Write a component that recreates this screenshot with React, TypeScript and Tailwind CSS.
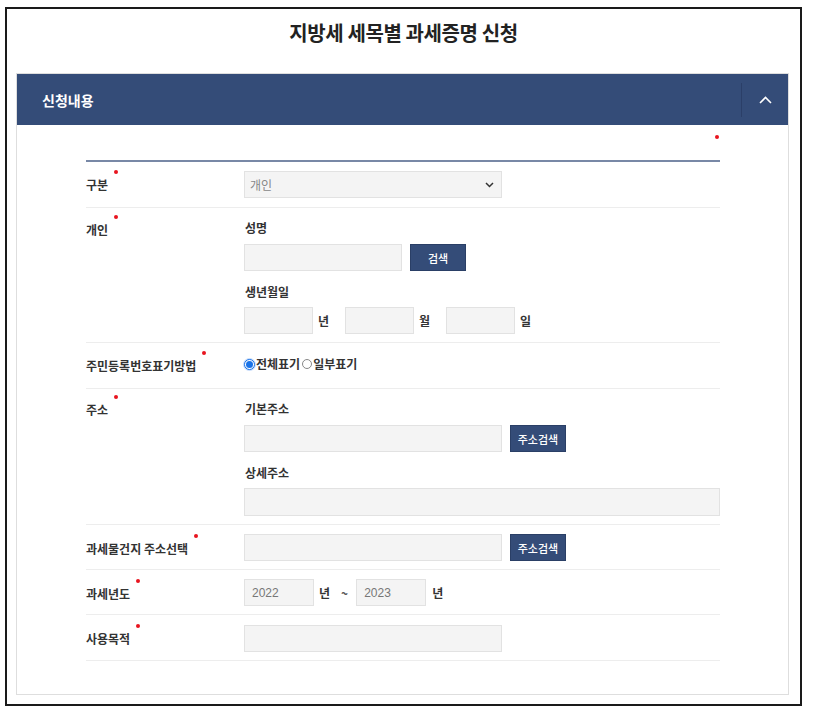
import React from "react";

const KR = { fontFamily: '"Noto Sans CJK KR", "Noto Sans", sans-serif' };

function Dot({ dx = 6 }: { dx?: number }) {
  return (
    <span
      className="absolute top-[-4px] w-[4px] h-[4px] rounded-full bg-[#e8141e]"
      style={{ left: `calc(100% + ${dx}px)` }}
    />
  );
}

function Label({ text, pt, dx }: { text: string; pt: string; dx?: number }) {
  return (
    <div className={`w-[158px] shrink-0 flex items-start ${pt}`}>
      <span className="relative block h-[22px] text-[12px] leading-[22px] font-semibold text-[#333]">
        {text}
        <Dot dx={dx} />
      </span>
    </div>
  );
}

function Input({ w, h = "h-[27px]", children }: { w: string; h?: string; children?: React.ReactNode }) {
  return (
    <div className={`${w} ${h} shrink-0 bg-[#f4f4f4] border border-[#e2e2e2] flex items-center`}>{children}</div>
  );
}

function Btn({ text, w }: { text: string; w: string }) {
  return (
    <div className={`${w} h-[27px] shrink-0 bg-[#344c78] border border-[#2a3f66] flex items-center justify-center text-white text-[11px] leading-[14px] font-medium`}>
      {text}
    </div>
  );
}

function SubLabel({ text }: { text: string }) {
  return <div className="h-[22px] leading-[22px] text-[12px] font-semibold text-[#333] pl-[1px]">{text}</div>;
}

export default function App() {
  return (
    <div className="w-[814px] h-[716px] bg-white pt-[7px] pl-[5px]" style={KR}>
      <div className="w-[797px] h-[699px] border-2 border-[#1a1a1a] flex flex-col">
        <div className="h-[64px] shrink-0 pt-[10px] text-center text-[20px] leading-[28px] font-bold text-[#222] tracking-[-0.4px]">
          지방세 세목별 과세증명 신청
        </div>
        <div className="ml-[9px] w-[773px] h-[622px] border border-[#dedede] flex flex-col">
          <div className="h-[51px] bg-[#344c78] flex items-center justify-between shrink-0">
            <div className="pl-[25px] text-white text-[14px] leading-[20px] font-bold">신청내용</div>
            <div className="w-[47px] h-[34px] border-l border-[#2b3f68] flex items-center justify-center">
              <svg width="13" height="8" viewBox="0 0 13 8">
                <path d="M1 7 L6.5 1.5 L12 7" fill="none" stroke="#fff" strokeWidth="1.6" />
              </svg>
            </div>
          </div>
          <div className="pl-[69px] pr-[68px] text-[12px] leading-[22px]">
            <div className="h-[35px] relative">
              <span className="absolute right-[1px] top-[10px] w-[4px] h-[4px] rounded-full bg-[#e8141e]" />
            </div>
            <div className="h-[2px] bg-[#7888a6]" />

            {/* 구분 */}
            <div className="flex border-b border-[#ededed] pt-[9px] pb-[9px]">
              <Label text="구분" pt="pt-[3px]" />
              <div className="w-[258px] h-[27px] bg-[#f4f4f4] border border-[#e2e2e2] flex items-center justify-between pl-[5px] pr-[7px]">
                <span className="text-[12px] text-[#888]">개인</span>
                <svg width="9" height="6" viewBox="0 0 9 6">
                  <path d="M1 1 L4.5 4.5 L8 1" fill="none" stroke="#333" strokeWidth="1.5" />
                </svg>
              </div>
            </div>

            {/* 개인 */}
            <div className="flex border-b border-[#ededed] pt-[9px] pb-[8px]">
              <Label text="개인" pt="pt-[2px]" />
              <div className="flex flex-col">
                <SubLabel text="성명" />
                <div className="flex gap-[8px] mt-[5px]">
                  <Input w="w-[158px]" />
                  <Btn text="검색" w="w-[56px]" />
                </div>
                <div className="mt-[10px]">
                  <SubLabel text="생년월일" />
                </div>
                <div className="flex items-center mt-[4px] text-[12px] font-semibold text-[#333]">
                  <Input w="w-[69px]" />
                  <span className="w-[32px] pl-[5px]">년</span>
                  <Input w="w-[69px]" />
                  <span className="w-[32px] pl-[5px]">월</span>
                  <Input w="w-[69px]" />
                  <span className="pl-[5px]">일</span>
                </div>
              </div>
            </div>

            {/* 주민등록번호표기방법 */}
            <div className="flex border-b border-[#ededed] pt-[10px] pb-[11px]">
              <Label text="주민등록번호표기방법" pt="pt-[2px]" />
              <div className="h-[22px] flex items-center text-[12px] font-semibold text-[#333]">
                <span className="w-[11px] h-[11px] rounded-full border border-[#1a73e8] bg-white flex items-center justify-center shadow-[0_0_0_1px_#c8dcfa]">
                  <span className="w-[7px] h-[7px] rounded-full bg-[#1a73e8]" />
                </span>
                <span className="ml-[1px]">전체표기</span>
                <span className="ml-[2px] w-[10px] h-[10px] rounded-full border border-[#888] bg-white" />
                <span className="ml-[1px]">일부표기</span>
              </div>
            </div>

            {/* 주소 */}
            <div className="flex border-b border-[#ededed] pt-[9px] pb-[8px]">
              <Label text="주소" pt="pt-[1px]" />
              <div className="flex flex-col flex-1">
                <SubLabel text="기본주소" />
                <div className="flex gap-[8px] mt-[5px]">
                  <Input w="w-[258px]" />
                  <Btn text="주소검색" w="w-[56px]" />
                </div>
                <div className="mt-[10px]">
                  <SubLabel text="상세주소" />
                </div>
                <div className="mt-[4px]">
                  <Input w="w-full" h="h-[28px]" />
                </div>
              </div>
            </div>

            {/* 과세물건지 주소선택 */}
            <div className="flex border-b border-[#ededed] pt-[9px] pb-[8px]">
              <Label text="과세물건지 주소선택" pt="pt-[4px]" />
              <div className="flex gap-[8px]">
                <Input w="w-[258px]" />
                <Btn text="주소검색" w="w-[56px]" />
              </div>
            </div>

            {/* 과세년도 */}
            <div className="flex border-b border-[#ededed] pt-[9px] pb-[8px]">
              <Label text="과세년도" pt="pt-[4px]" />
              <div className="flex items-center text-[12px] font-semibold text-[#333]">
                <Input w="w-[70px]">
                  <span className="pl-[7px] text-[12px] font-normal text-[#777]" style={{ fontFamily: '"Liberation Sans", Arial, sans-serif' }}>2022</span>
                </Input>
                <span className="pl-[5px]">년</span>
                <span className="pl-[11px] pr-[8px] text-[#555]">~</span>
                <Input w="w-[70px]">
                  <span className="pl-[7px] text-[12px] font-normal text-[#777]" style={{ fontFamily: '"Liberation Sans", Arial, sans-serif' }}>2023</span>
                </Input>
                <span className="pl-[6px]">년</span>
              </div>
            </div>

            {/* 사용목적 */}
            <div className="flex border-b border-[#ededed] pt-[10px] pb-[8px]">
              <Label text="사용목적" pt="pt-[3px]" />
              <Input w="w-[258px]" />
            </div>
          </div>
        </div>
      </div>
    </div>
  );
}
